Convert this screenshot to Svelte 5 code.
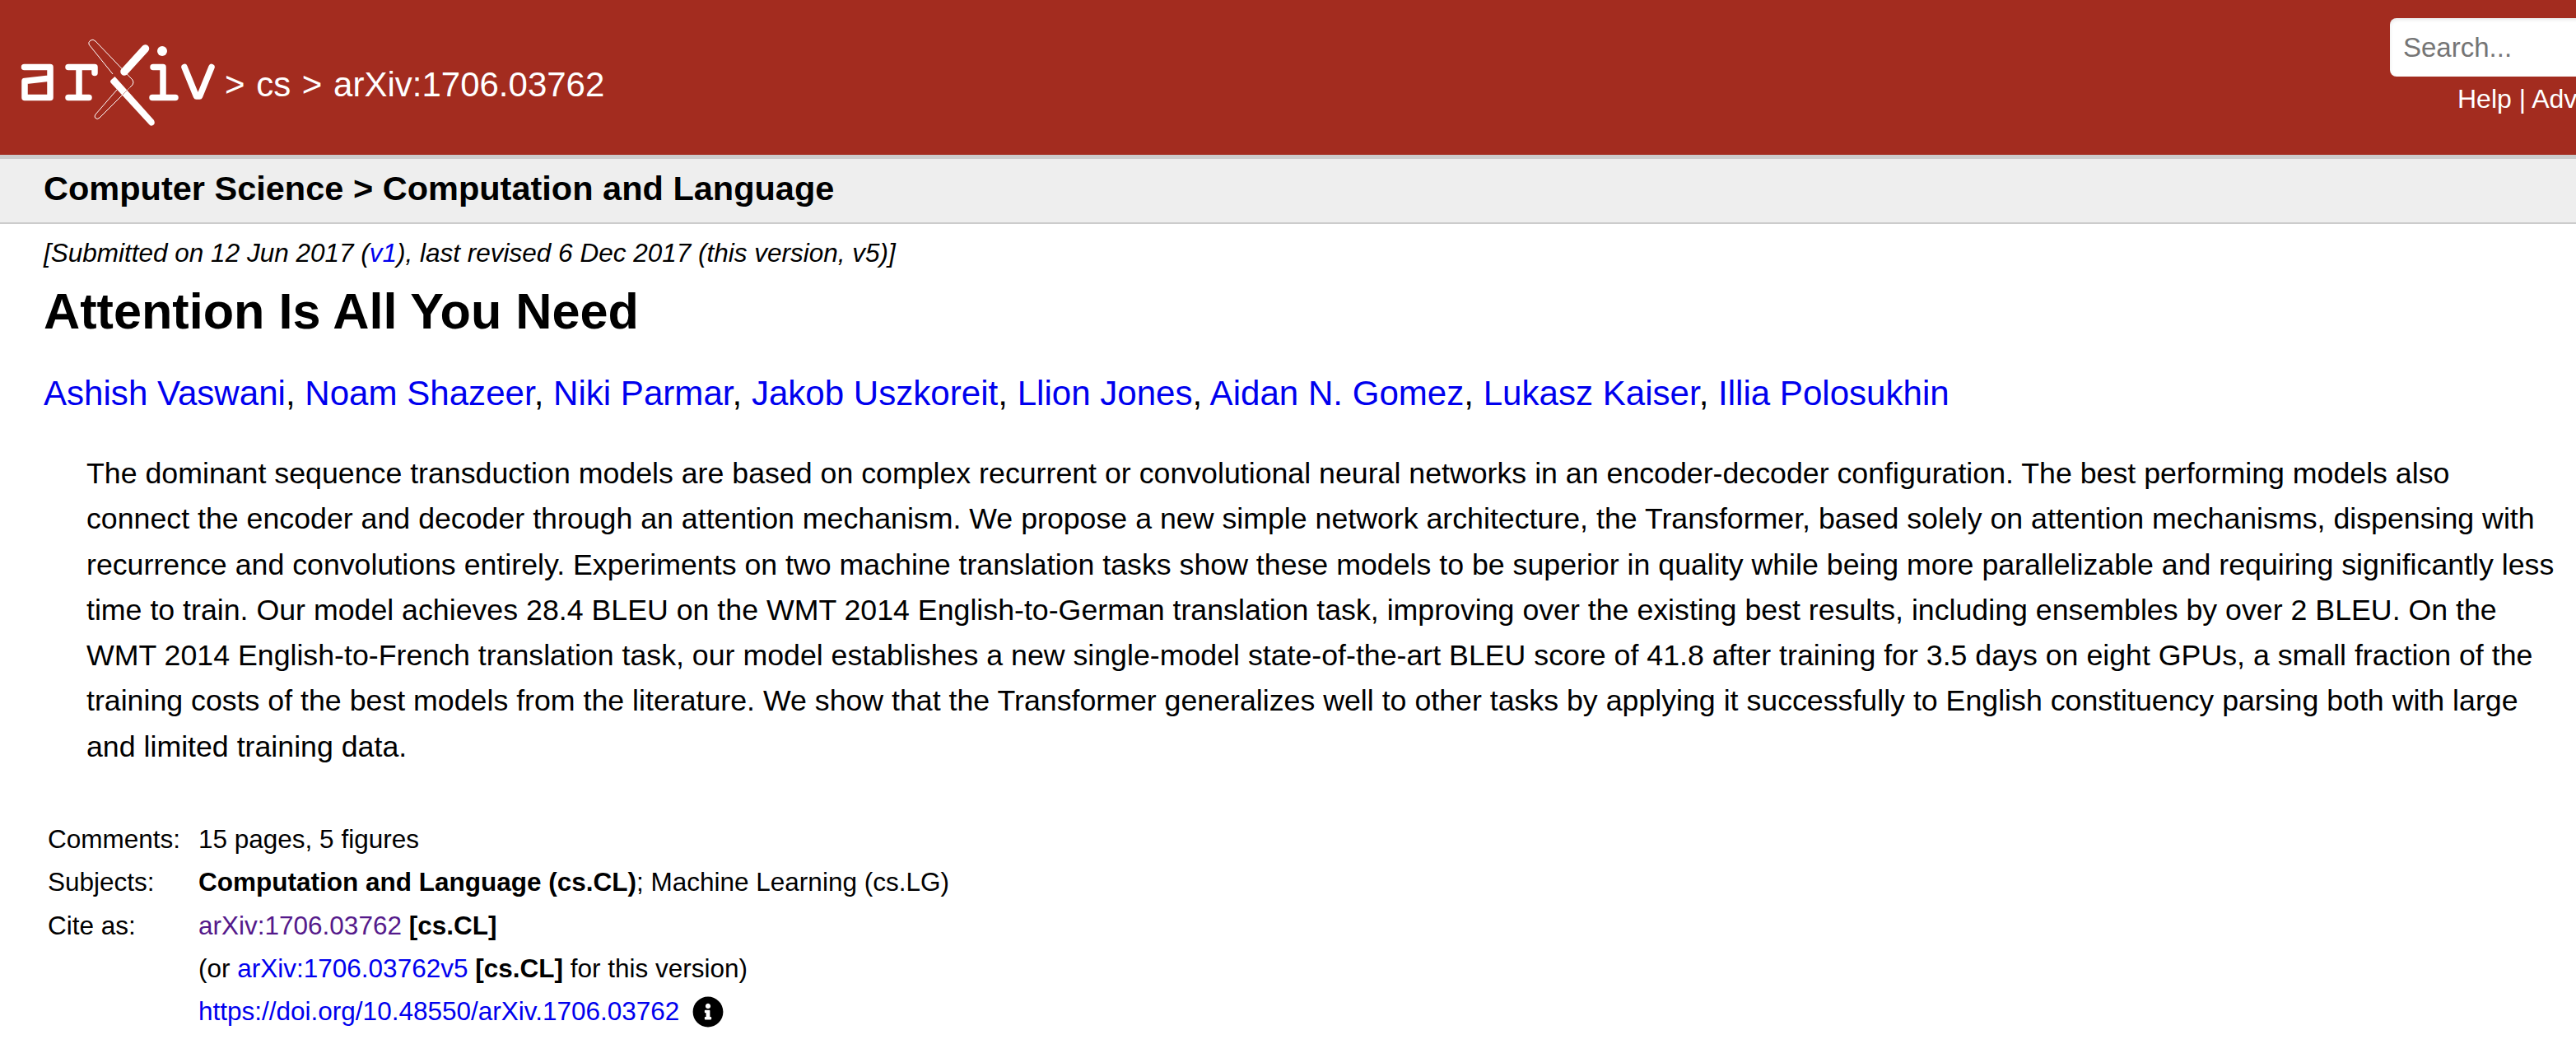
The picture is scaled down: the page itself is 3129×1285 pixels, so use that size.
<script>
	const authors = [
		'Ashish Vaswani',
		'Noam Shazeer',
		'Niki Parmar',
		'Jakob Uszkoreit',
		'Llion Jones',
		'Aidan N. Gomez',
		'Lukasz Kaiser',
		'Illia Polosukhin'
	];
</script>

<header class="masthead">
	<div class="brand">
		<svg class="logo" viewBox="0 0 280 188" aria-label="arXiv logo">
			<g class="letters">
				<path d="M29.500 81.500H61V118.500H30V98.500L61 95" />
				<path d="M83 81.500H115V88.500M96 81.500V118.500M83 118.500H108" />
				<path d="M186 81.500H198V118.500M185 118.500H213" />
				<path d="M224 81.500L238.500 117H242.500L257 81.500" />
			</g>
			<circle cx="197" cy="62" r="6" fill="#fff" />
			<path class="bar" d="M176.500 59L151 87" />
			<path class="bar-fat" d="M139.500 93L187 146Q189 150 186 152Q183 154 181 151L135 101Q133 99 135 97Z" />
			<path class="ghost" d="M108 54Q107 51 110 49Q113 47 116 50L161 97Q163 100 161 103L121 143Q118 146 115.500 143Q114.500 141 116 139L142 109" />
			<path class="ghost" d="M108 54L137 90" />
			<path class="ghost-cut" d="M158 106L149 115" />
		</svg>
		<div class="crumbs">&gt; cs &gt; arXiv:1706.03762</div>
	</div>
	<div class="search">
		<input type="text" placeholder="Search..." />
		<div class="search-links">Help | Advanced Search</div>
	</div>
</header>

<div class="subheader">
	<h1>Computer Science &gt; Computation and Language</h1>
</div>

<main>
	<div class="dateline">
		[Submitted on 12 Jun 2017 (<a href="#v1">v1</a>), last revised 6 Dec 2017 (this version, v5)]
	</div>
	<h1 class="title">Attention Is All You Need</h1>
	<div class="authors">
		{#each authors as author, i}{#if i > 0}{', '}{/if}<a href="#a">{author}</a>{/each}
	</div>
	<blockquote class="abstract">
		The dominant sequence transduction models are based on complex recurrent or convolutional neural networks in an encoder-decoder configuration. The best performing models also connect the encoder and decoder through an attention mechanism. We propose a new simple network architecture, the Transformer, based solely on attention mechanisms, dispensing with recurrence and convolutions entirely. Experiments on two machine translation tasks show these models to be superior in quality while being more parallelizable and requiring significantly less time to train. Our model achieves 28.4 BLEU on the WMT 2014 English-to-German translation task, improving over the existing best results, including ensembles by over 2 BLEU. On the WMT 2014 English-to-French translation task, our model establishes a new single-model state-of-the-art BLEU score of 41.8 after training for 3.5 days on eight GPUs, a small fraction of the training costs of the best models from the literature. We show that the Transformer generalizes well to other tasks by applying it successfully to English constituency parsing both with large and limited training data.
	</blockquote>
	<div class="meta">
		<div class="label">Comments:</div>
		<div>15 pages, 5 figures</div>
		<div class="label">Subjects:</div>
		<div><b>Computation and Language (cs.CL)</b>; Machine Learning (cs.LG)</div>
		<div class="label">Cite as:</div>
		<div><a class="visited" href="#c">arXiv:1706.03762</a> <b>[cs.CL]</b></div>
		<div></div>
		<div>(or <a href="#c">arXiv:1706.03762v5</a> <b>[cs.CL]</b> for this version)</div>
		<div></div>
		<div class="doi">
			<a href="#doi">https://doi.org/10.48550/arXiv.1706.03762</a>
			<svg class="info" viewBox="0 0 512 512" aria-hidden="true">
				<path d="M256 8C119.043 8 8 119.083 8 256c0 136.997 111.043 248 248 248s248-111.003 248-248C504 119.083 392.957 8 256 8zm0 110c23.196 0 42 18.804 42 42s-18.804 42-42 42-42-18.804-42-42 18.804-42 42-42zm56 254c0 6.627-5.373 12-12 12h-88c-6.627 0-12-5.373-12-12v-24c0-6.627 5.373-12 12-12h12v-64h-12c-6.627 0-12-5.373-12-12v-24c0-6.627 5.373-12 12-12h64c6.627 0 12 5.373 12 12v100h12c6.627 0 12 5.373 12 12v24z" />
			</svg>
		</div>
	</div>
</main>

<style>
	:global(body) {
		margin: 0;
		background: #fff;
		overflow: hidden;
		font-family: "Liberation Sans", Arial, sans-serif;
		color: #000;
	}

	a {
		color: #0000ee;
		text-decoration: none;
	}

	.masthead {
		height: 188px;
		background: #a32c1f;
		border-bottom: 5px solid #ccc;
		display: grid;
		grid-template-columns: 2903px 400px;
		overflow: hidden;
		box-sizing: content-box;
	}

	.brand {
		display: flex;
		align-items: flex-start;
	}

	.logo {
		width: 280px;
		height: 188px;
		flex-shrink: 0;
	}

	.letters path {
		fill: none;
		stroke: #fff;
		stroke-width: 7.500;
		stroke-linecap: round;
		stroke-linejoin: round;
	}

	.bar {
		fill: none;
		stroke: #fff;
		stroke-width: 9.500;
		stroke-linecap: round;
	}

	.bar-fat {
		fill: #fff;
	}

	.ghost {
		fill: none;
		stroke: #fff;
		stroke-width: 1;
	}

	.ghost-cut {
		fill: none;
		stroke: #a32c1f;
		stroke-width: 0.8;
		opacity: 0.6;
	}

	.crumbs {
		margin: 0 0 0 -7px;
		padding-top: 80px;
		font-size: 42px;
		line-height: 46px;
		word-spacing: 2px;
		color: #fff;
		white-space: nowrap;
	}

	.search {
		padding-top: 22px;
	}

	.search input {
		display: block;
		width: 400px;
		height: 71px;
		box-sizing: border-box;
		border: none;
		border-radius: 8px;
		padding: 0 16px;
		background: #fff;
		box-shadow: inset 0 2px 4px rgba(10, 10, 10, 0.1);
		font-family: inherit;
		font-size: 33px;
		outline: none;
	}

	.search input::placeholder {
		color: #757575;
		opacity: 1;
	}

	.search-links {
		margin: 7px 0 0 82px;
		font-size: 32px;
		line-height: 40px;
		color: #fff;
		white-space: nowrap;
	}

	.subheader {
		height: 79px;
		background: #eee;
		border-bottom: 2px solid #ccc;
		padding: 0 0 6px 53px;
		box-sizing: border-box;
		display: flex;
		align-items: center;
	}

	.subheader h1 {
		margin: 0;
		font-size: 41.500px;
		font-weight: 700;
		line-height: 1.2;
	}

	main {
		padding: 0 0 0 53px;
	}

	.dateline {
		margin-top: 16px;
		font-size: 31.500px;
		font-style: italic;
		line-height: 38px;
	}

	.title {
		margin: 16px 0 0;
		font-size: 61.200px;
		font-weight: 700;
		line-height: 72px;
	}

	.authors {
		margin-top: 38px;
		font-size: 42.080px;
		line-height: 52px;
	}

	.abstract {
		margin: 44px 23px 0 52px;
		font-size: 35.720px;
		line-height: 55.300px;
	}

	.meta {
		margin: 58px 0 0 5px;
		display: grid;
		grid-template-columns: 183px 1fr;
		grid-auto-rows: 52.400px;
		align-items: center;
		font-size: 31.500px;
	}

	.visited {
		color: #551a8b;
	}

	.doi {
		display: flex;
		align-items: center;
		gap: 16px;
	}

	.info {
		width: 38px;
		height: 38px;
		fill: #000;
		flex-shrink: 0;
	}
</style>
